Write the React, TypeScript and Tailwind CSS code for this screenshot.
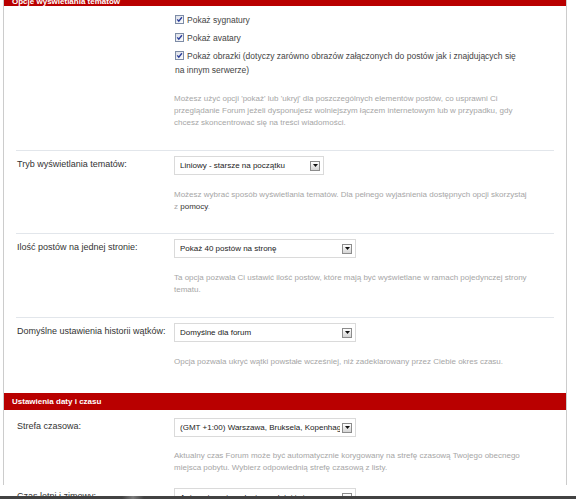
import React from "react";

function Check() {
  return (
    <svg width="9" height="9" viewBox="0 0 9 9" className="inline-block align-[-1px] mr-[3px]">
      <defs>
        <linearGradient id="cbg" x1="0" y1="0" x2="1" y2="1">
          <stop offset="0" stopColor="#d9dde6" />
          <stop offset="1" stopColor="#ffffff" />
        </linearGradient>
      </defs>
      <rect x="0.5" y="0.5" width="8" height="8" fill="url(#cbg)" stroke="#7d8ca6" />
      <path d="M2.2 4.4 L3.8 6.2 L6.9 2.3" fill="none" stroke="#2b3f9c" strokeWidth="1.4" />
    </svg>
  );
}

function Select({ text, w }: { text: string; w: string }) {
  return (
    <div className={`flex h-[19px] ${w} items-center border border-[#dadada] bg-white pl-[5px] pr-[3px]`}>
      <span className="mr-[2px] flex-1 overflow-hidden whitespace-nowrap text-[8px] leading-[10px] text-[#222222]">{text}</span>
      <span className="flex h-[10px] w-[10px] shrink-0 items-center justify-center border border-[#8c8c8c] bg-gradient-to-b from-white to-[#d4d4d4]">
        <svg width="5" height="3" viewBox="0 0 5 3">
          <path d="M0 0 H5 L2.5 3 Z" fill="#111" />
        </svg>
      </span>
    </div>
  );
}

function Help({ children, mt = "mt-[14px]" }: { children: React.ReactNode; mt?: string }) {
  return (
    <div className={`${mt} whitespace-nowrap text-[8px] leading-[12px] text-[#a6a6a6]`}>{children}</div>
  );
}

function Sep() {
  return <div className="mx-[12px] h-px bg-[#e2e6eb]" />;
}

function Row({
  label,
  children,
  pt = "pt-[5px]",
  pb = "pb-[21px]",
}: {
  label?: string;
  children: React.ReactNode;
  pt?: string;
  pb?: string;
}) {
  return (
    <div className={`flex ${pt} ${pb}`}>
      <div className="w-[170px] shrink-0 pl-[13px] pt-[2px] whitespace-nowrap text-[9px] leading-[12px] text-[#333333]">
        {label}
      </div>
      <div className="flex-1">{children}</div>
    </div>
  );
}

export default function App() {
  return (
    <div className="flex h-[499px] w-[576px] flex-col overflow-hidden bg-white font-['Liberation_Sans',Arial,sans-serif]">
      <div className="min-h-0 flex-1 overflow-hidden pl-[3px] pr-[9px]">
        <div className="h-full border-x border-[#cccccc]">
          <div className="-mt-[11px] flex h-[17px] items-end bg-[#b90000] pl-[8px] text-[8px] font-bold leading-[9px] text-white">
            Opcje wyświetlania tematów
          </div>

          <Row pt="pt-[7px]" pb="pb-[21px]">
            <div className="pl-[1px] whitespace-nowrap text-[8.5px] leading-[14px] text-[#444444]">
              <div>
                <Check />
                Pokaż sygnatury
              </div>
              <div className="mt-[4px]">
                <Check />
                Pokaż avatary
              </div>
              <div className="mt-[4px]">
                <Check />
                Pokaż obrazki (dotyczy zarówno obrazów załączonych do postów jak i znajdujących się
                <br />
                na innym serwerze)
              </div>
            </div>
            <Help mt="mt-[16px]">
              Możesz użyć opcji 'pokaż' lub 'ukryj' dla poszczególnych elementów postów, co usprawni Ci
              <br />
              przeglądanie Forum jeżeli dysponujesz wolniejszym łączem internetowym lub w przypadku, gdy
              <br />
              chcesz skoncentrować się na treści wiadomości.
            </Help>
          </Row>
          <Sep />

          <Row label="Tryb wyświetlania tematów:" pb="pb-[20px]">
            <Select text="Liniowy - starsze na początku" w="w-[150px]" />
            <Help>
              Możesz wybrać sposób wyświetlania tematów. Dla pełnego wyjaśnienia dostępnych opcji skorzystaj
              <br />z <span className="text-[#333333]">pomocy</span>.
            </Help>
          </Row>
          <Sep />

          <Row label="Ilość postów na jednej stronie:" pb="pb-[21px]">
            <Select text="Pokaż 40 postów na stronę" w="w-[182px]" />
            <Help>
              Ta opcja pozwala Ci ustawić ilość postów, które mają być wyświetlane w ramach pojedynczej strony
              <br />
              tematu.
            </Help>
          </Row>
          <Sep />

          <Row label="Domyślne ustawienia historii wątków:" pb="pb-[25px]">
            <Select text="Domyślne dla forum" w="w-[182px]" />
            <Help>Opcja pozwala ukryć wątki powstałe wcześniej, niż zadeklarowany przez Ciebie okres czasu.</Help>
          </Row>

          <div className="flex h-[17px] items-center bg-[#b90000] pl-[8px] text-[8px] font-bold leading-[9px] text-white">
            Ustawienia daty i czasu
          </div>

          <Row label="Strefa czasowa:" pt="pt-[8px]" pb="pb-[14px]">
            <Select text="(GMT +1:00) Warszawa, Bruksela, Kopenhaga, Madryt, Paryż" w="w-[182px]" />
            <Help mt="mt-[13px]">
              Aktualny czas Forum może być automatycznie korygowany na strefę czasową Twojego obecnego
              <br />
              miejsca pobytu. Wybierz odpowiednią strefę czasową z listy.
            </Help>
          </Row>

          <Row label="Czas letni i zimowy:" pt="pt-0" pb="pb-[10px]">
            <Select text="Automatycznie wykryj czas letni i zimowy" w="w-[182px]" />
          </Row>
        </div>
      </div>
      <div className="flex h-[3px] shrink-0 bg-[#424242]">
        <div className="ml-[122px] h-full w-[22px] bg-gradient-to-r from-[#424242] via-[#7c7c7c] to-[#424242]" />
      </div>
    </div>
  );
}
